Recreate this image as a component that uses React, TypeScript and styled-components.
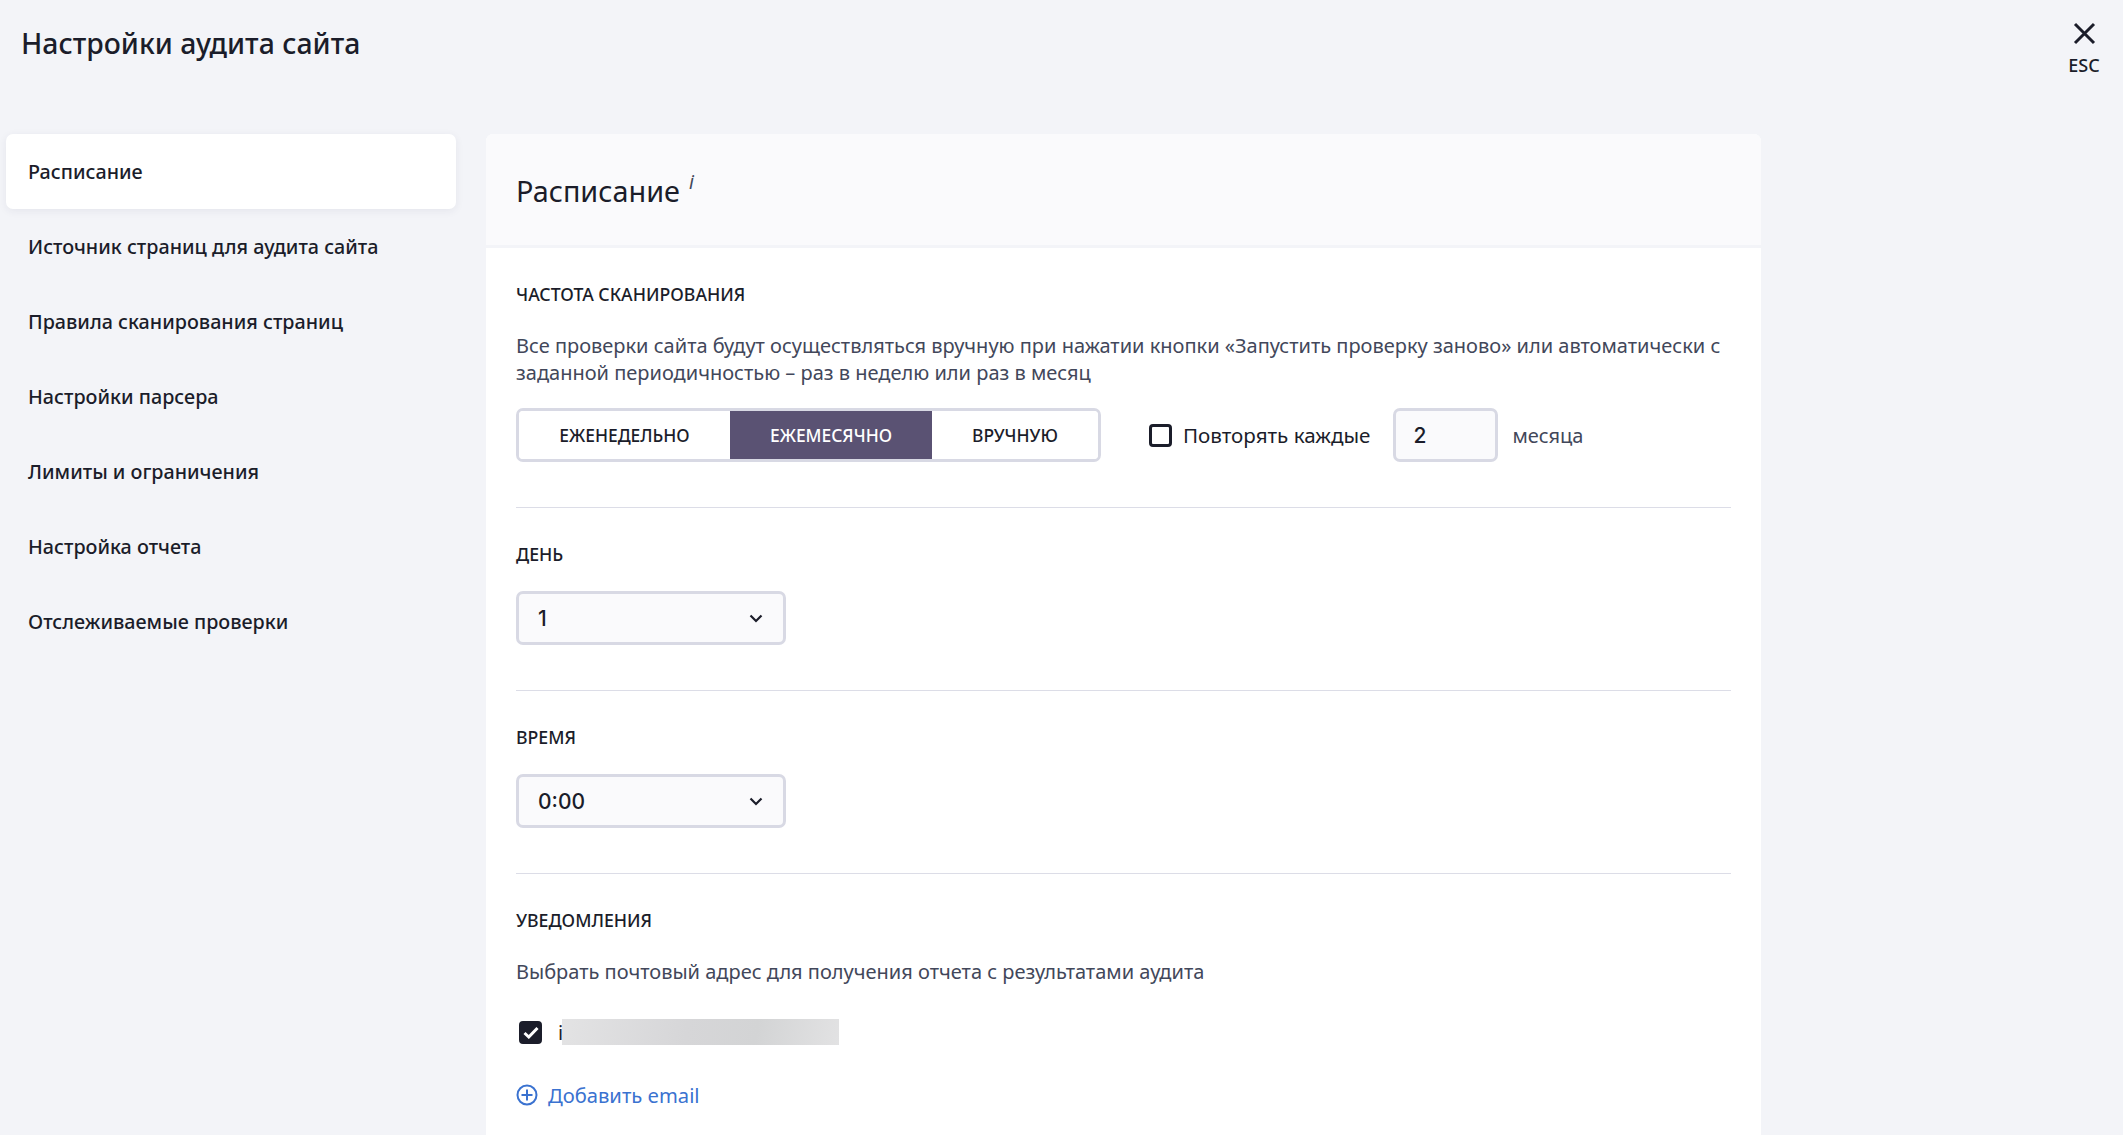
import React from "react";
import styled, { createGlobalStyle } from "styled-components";

const Global = createGlobalStyle`
  html, body { margin: 0; padding: 0; height: 100%; overflow: hidden; background: #f3f4f8; }
  body { font-family: "Noto Sans", "Open Sans", Arial, sans-serif; color: #1b1d2a; }
  #root { height: 100%; }
`;

const Page = styled.div`
  height: 1135px;
  overflow: hidden;
  background: #f3f4f8;
  position: relative;
`;
const Header = styled.header`
  height: 134px;
  padding: 25px 0 0 21px;
  box-sizing: border-box;
`;
const Title = styled.h1`
  margin: 0;
  font-size: 28.4px;
  line-height: 36px;
  font-weight: 500;
  color: #1b1d2a;
`;
const Close = styled.button`
  position: absolute;
  top: 22px;
  right: 21px;
  width: 36px;
  padding: 0;
  border: 0;
  background: none;
  display: flex;
  flex-direction: column;
  align-items: center;
  gap: 9px;
  font: 500 18px/22px "Noto Sans", sans-serif;
  color: #1b1d2a;
`;
const Columns = styled.div`
  display: flex;
  padding-left: 6px;
  gap: 30px;
  align-items: flex-start;
`;
const Nav = styled.nav`
  width: 450px;
  flex: none;
  display: flex;
  flex-direction: column;
`;
const NavItem = styled.div<{ $active?: boolean }>`
  height: 75px;
  display: flex;
  align-items: center;
  padding-left: 22px;
  font-size: 19.75px;
  font-weight: 500;
  color: #1b1d2a;
  border-radius: 7px;
  background: ${(p) => (p.$active ? "#fff" : "transparent")};
  box-shadow: ${(p) => (p.$active ? "0 2px 8px rgba(40,44,80,.07)" : "none")};
`;
const Panel = styled.main`
  width: 1275px;
  flex: none;
  background: #fff;
  border-radius: 7px 7px 0 0;
`;
const PanelHead = styled.div`
  height: 109px;
  padding: 2px 30px 0;
  display: flex;
  align-items: center;
  background: #fafafc;
  border-bottom: 3px solid #f3f4f8;
  border-radius: 7px 7px 0 0;
`;
const PanelTitle = styled.h2`
  margin: 0;
  font-size: 28.8px;
  line-height: 42px;
  font-weight: 400;
  color: #1b1d2a;
`;
const Hint = styled.sup`
  font: italic 400 19px/1 "Noto Sans", sans-serif;
  margin-left: 9px;
  color: #42475a;
  vertical-align: 13px;
`;
const Body = styled.div`
  padding: 0 30px;
`;
const Section = styled.section`
  padding: 34px 0 45px;
  border-bottom: 1px solid #dcdde7;
  &:last-child { border-bottom: 0; }
`;
const Label = styled.h3`
  margin: 0;
  font-size: 17.7px;
  line-height: 24px;
  font-weight: 500;
  text-transform: uppercase;
  color: #1b1d2a;
`;
const Text = styled.p`
  margin: 26px 0 22px;
  font-size: 20px;
  line-height: 27px;
  color: #42475a;
`;
const Row = styled.div`
  display: flex;
  align-items: center;
`;
const Segments = styled.div`
  width: 585px;
  height: 54px;
  box-sizing: border-box;
  border: 3px solid #d8d9e4;
  border-radius: 7px;
  display: flex;
  overflow: hidden;
`;
const Segment = styled.button<{ $active?: boolean; $w: number }>`
  width: ${(p) => p.$w}px;
  border: 0;
  padding: 0;
  font: 500 17.4px "Noto Sans", sans-serif;
  text-transform: uppercase;
  background: ${(p) => (p.$active ? "#5a5273" : "#fff")};
  color: ${(p) => (p.$active ? "#fff" : "#1b1d2a")};
`;
const Box = styled.span<{ $checked?: boolean; $gap?: number }>`
  width: 23px;
  height: 23px;
  box-sizing: border-box;
  flex: none;
  margin-left: ${(p) => p.$gap ?? 0}px;
  border: 3px solid #1b1d2a;
  border-radius: 4px;
  background: ${(p) => (p.$checked ? "#1b1d2a" : "#fff")};
  display: flex;
  align-items: center;
  justify-content: center;
`;
const RepeatLabel = styled.label`
  margin-left: 11px;
  font-size: 20.6px;
  color: #1b1d2a;
`;
const Field = styled.div`
  height: 54px;
  box-sizing: border-box;
  border: 3px solid #d8d9e4;
  border-radius: 7px;
  background: #fafafc;
  display: flex;
  align-items: center;
  font: 500 21px Inter, sans-serif;
  color: #1b1d2a;
`;
const NumberField = styled(Field)`
  width: 105px;
  margin-left: 23px;
  padding-left: 17px;
`;
const Unit = styled.span`
  margin-left: 14px;
  font-size: 20px;
  color: #42475a;
`;
const SelectField = styled(Field)`
  width: 270px;
  margin-top: 25px;
  padding: 0 20px 0 19px;
  justify-content: space-between;
`;
const Email = styled(Row)`
  height: 26px;
  margin-top: 34px;
  padding-left: 3px;
`;
const EmailStart = styled.span`
  margin-left: 16px;
  font-size: 20px;
`;
const Redacted = styled.div`
  position: relative;
  margin-left: -1px;
  width: 277px;
  height: 26px;
  background: linear-gradient(100deg, #e3e3e4, #d6d6d8 45%, #d3d4d5 70%, #e2e2e3);
`;
const AddLink = styled.a`
  margin-top: 36px;
  height: 27px;
  display: flex;
  align-items: center;
  gap: 10px;
  font-size: 20.2px;
  color: #3a72d0;
`;
const Chevron = () => (
  <svg width="14" height="9" viewBox="0 0 14 9" fill="none" stroke="#1b1d2a" strokeWidth="2.2">
    <path d="M1.5 1.5 7 7l5.5-5.5" />
  </svg>
);

const nav = [
  "Расписание",
  "Источник страниц для аудита сайта",
  "Правила сканирования страниц",
  "Настройки парсера",
  "Лимиты и ограничения",
  "Настройка отчета",
  "Отслеживаемые проверки",
];

export default function App() {
  return (
    <Page>
      <Global />
      <Header>
        <Title>Настройки аудита сайта</Title>
      </Header>
      <Close>
        <svg width="23" height="23" viewBox="0 0 23 23" fill="none" stroke="#1b1d2a" strokeWidth="3">
          <path d="M2 2l19 19M21 2 2 21" />
        </svg>
        ESC
      </Close>
      <Columns>
        <Nav>
          {nav.map((n, i) => (
            <NavItem key={n} $active={i === 0}>{n}</NavItem>
          ))}
        </Nav>
        <Panel>
          <PanelHead>
            <PanelTitle>Расписание<Hint>i</Hint></PanelTitle>
          </PanelHead>
          <Body>
            <Section>
              <Label>Частота сканирования</Label>
              <Text>
                Все проверки сайта будут осуществляться вручную при нажатии кнопки «Запустить проверку заново» или автоматически с заданной периодичностью – раз в неделю или раз в месяц
              </Text>
              <Row>
                <Segments>
                  <Segment $w={211}>Еженедельно</Segment>
                  <Segment $w={202} $active>Ежемесячно</Segment>
                  <Segment $w={166}>Вручную</Segment>
                </Segments>
                <Box $gap={48} />
                <RepeatLabel>Повторять каждые</RepeatLabel>
                <NumberField>2</NumberField>
                <Unit>месяца</Unit>
              </Row>
            </Section>
            <Section>
              <Label>День</Label>
              <SelectField>1<Chevron /></SelectField>
            </Section>
            <Section>
              <Label>Время</Label>
              <SelectField>0:00<Chevron /></SelectField>
            </Section>
            <Section>
              <Label>Уведомления</Label>
              <Text>Выбрать почтовый адрес для получения отчета с результатами аудита</Text>
              <Email>
                <Box $checked>
                  <svg width="16" height="13" viewBox="0 0 16 13" fill="none" stroke="#fff" strokeWidth="3">
                    <path d="M1.5 7 5.8 11 14.5 2" />
                  </svg>
                </Box>
                <EmailStart>i</EmailStart>
                <Redacted />
              </Email>
              <AddLink>
                <svg width="22" height="22" viewBox="0 0 22 22" fill="none" stroke="#3a72d0" strokeWidth="2">
                  <circle cx="11" cy="11" r="9.5" />
                  <path d="M11 5.5v11M5.5 11h11" />
                </svg>
                Добавить email
              </AddLink>
            </Section>
          </Body>
        </Panel>
      </Columns>
    </Page>
  );
}
